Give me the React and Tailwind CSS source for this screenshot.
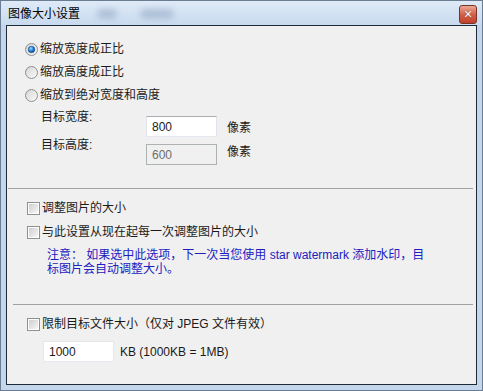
import React from "react";

const font = "font-['Liberation_Sans','Noto_Sans_CJK_SC',sans-serif]";

function Radio({ checked }) {
  return (
    <svg width="13" height="13" viewBox="0 0 13 13" className="shrink-0">
      <defs>
        <linearGradient id={checked ? "rg1" : "rg0"} x1="0" y1="0" x2="1" y2="1">
          <stop offset="0" stopColor="#d4d4d4" />
          <stop offset="1" stopColor="#fbfbfb" />
        </linearGradient>
        <radialGradient id="dot" cx="0.4" cy="0.35" r="0.7">
          <stop offset="0" stopColor="#9fd8ff" />
          <stop offset="0.5" stopColor="#2a86d6" />
          <stop offset="1" stopColor="#0b3f86" />
        </radialGradient>
      </defs>
      <circle cx="6.5" cy="6.5" r="6" fill={`url(#${checked ? "rg1" : "rg0"})`} stroke="#8e8f8f" strokeWidth="1" />
      {checked && <circle cx="6.5" cy="6.5" r="3.3" fill="url(#dot)" stroke="#1c4f8e" strokeWidth="0.6" />}
    </svg>
  );
}

function Check() {
  return (
    <div className="w-[13px] h-[13px] shrink-0 border border-[#8e8f8f] bg-white p-[1px]">
      <div className="w-full h-full bg-gradient-to-br from-[#cfcfcf] to-[#f6f6f6]" />
    </div>
  );
}

export default function App() {
  return (
    <div className={`w-[483px] h-[391px] border border-[#6a7d93] bg-[#c4d6ec] flex flex-col text-[12px] text-[#1a1a1a] ${font}`}>
      {/* title bar */}
      <div className="h-[24px] shrink-0 relative bg-gradient-to-b from-[#dfeaf7] to-[#c8daef] flex items-start">
        <span className="ml-[7px] mt-[6px] text-[12px] leading-[14px] text-black">图像大小设置</span>
        <div className="absolute left-[96px] top-[8px] w-[20px] h-[10px] rounded-full bg-[#9fb3cc] blur-[3px] opacity-70" />
        <div className="absolute left-[139px] top-[8px] w-[34px] h-[10px] rounded-full bg-[#9fb3cc] blur-[3px] opacity-70" />
        <div className="absolute right-[5px] top-[4px] w-[18px] h-[19px] rounded-[3px] border border-[#7a3426] bg-gradient-to-b from-[#e9a996] via-[#d2614a] to-[#c0402a] flex items-center justify-center">
          <span className="text-white text-[11px] leading-none font-bold font-['DejaVu_Sans',sans-serif] [text-shadow:0_0_1px_#5a1a10]">✕</span>
        </div>
      </div>
      {/* content */}
      <div className="flex-1 mx-[5px] mb-[5px] border border-[#1e2a36] bg-[#f0f0f0] flex flex-col">
        <div className="pt-[14px] pl-[18px] flex flex-col gap-[5px]">
          <div className="h-[18px] flex items-center gap-[2px]"><Radio checked /><span className="leading-[14px]">缩放宽度成正比</span></div>
          <div className="h-[18px] flex items-center gap-[2px]"><Radio /><span className="leading-[14px]">缩放高度成正比</span></div>
          <div className="h-[18px] flex items-center gap-[2px]"><Radio /><span className="leading-[14px]">缩放到绝对宽度和高度</span></div>
        </div>
        <div className="mt-[7px] pl-[34px] flex items-start">
          <span className="w-[105px] leading-[12px]">目标宽度:</span>
          <div className="mt-[5px] w-[71px] h-[21px] bg-white border border-[#abadb3] border-l-[#e2e3ea] border-r-[#e2e3ea] border-b-[#e3e9ef] flex items-center pl-[5px] leading-[14px]">800</div>
          <span className="ml-[10px] mt-[11px] leading-[12px]">像素</span>
        </div>
        <div className="mt-[2px] pl-[34px] flex items-start">
          <span className="w-[105px] leading-[12px]">目标高度:</span>
          <div className="mt-[5px] w-[71px] h-[21px] bg-[#f0f0f0] border border-[#adb2b5] flex items-center pl-[5px] leading-[14px] text-[#6d6d6d]">600</div>
          <span className="ml-[10px] mt-[7px] leading-[12px]">像素</span>
        </div>
        <div className="mt-[23px] ml-[1px] mr-[3px] h-[1px] bg-[#a0a0a0]" />
        <div className="mt-[12px] pl-[20px] h-[14px] flex items-center gap-[2px]"><Check /><span className="leading-[14px]">调整图片的大小</span></div>
        <div className="mt-[10px] pl-[20px] h-[14px] flex items-center gap-[2px]"><Check /><span className="leading-[14px]">与此设置从现在起每一次调整图片的大小</span></div>
        <div className="mt-[9px] pl-[40px] pr-[40px] leading-[14px] text-[#2020c0]">
          <div>注意： 如果选中此选项，下一次当您使用 star watermark 添加水印，目</div>
          <div>标图片会自动调整大小。</div>
        </div>
        <div className="mt-[28px] ml-[6px] mr-[3px] h-[1px] bg-[#a0a0a0]" />
        <div className="mt-[12px] pl-[20px] h-[14px] flex items-center gap-[2px]"><Check /><span className="leading-[14px]">限制目标文件大小（仅对 JPEG 文件有效）</span></div>
        <div className="mt-[10px] pl-[36px] flex items-center gap-[6px]">
          <div className="w-[71px] h-[21px] bg-white border border-[#e3e9ef] border-t-[#e6e6e6] flex items-center pl-[5px] leading-[14px]">1000</div>
          <span className="leading-[14px]">KB (1000KB = 1MB)</span>
        </div>
      </div>
    </div>
  );
}
